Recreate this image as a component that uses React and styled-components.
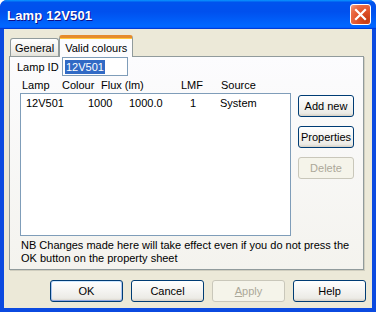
import React from 'react';
import styled, { createGlobalStyle } from 'styled-components';

const GlobalStyle = createGlobalStyle`
    html, body {
        margin: 0;
        padding: 0;
        background: #ffffff;
    }
    body {
        font-family: Tahoma, "Liberation Sans", Arial, sans-serif;
        font-size: 11px;
        color: #000;
    }
`

const Window = styled.div`
    width: 376px;
    height: 312px;
    display: flex;
    flex-direction: column;
    border-radius: 7px 7px 0 0;
    overflow: hidden;
    background: #0831d9;
`

const TitleBar = styled.div`
    height: 29px;
    flex: none;
    display: flex;
    align-items: center;
    justify-content: space-between;
    padding: 0 5px 0 7px;
    box-sizing: border-box;
    background: linear-gradient(180deg, #0997ff, #0053ee 8%, #0050ee 40%, #0066ff 88%, #0066ff 93%, #005bff 95%, #003dd7 96%, #003dd7);
`

const Title = styled.span`
    font-family: "Liberation Sans", Arial, sans-serif;
    font-weight: bold;
    font-size: 13px;
    color: #fff;
    text-shadow: 1px 1px #0f1089;
    letter-spacing: 0.2px;
    padding-top: 1px;
`

const CloseButton = styled.div`
    width: 21px;
    height: 21px;
    box-sizing: border-box;
    border: 1px solid #fff;
    border-radius: 3px;
    background: radial-gradient(circle at 80% 80%, #c43a12 0%, #e2532a 45%, #ea6e48 75%, #f2a58a 100%);
    display: flex;
    align-items: center;
    justify-content: center;
`

const Frame = styled.div`
    flex: 1;
    display: flex;
    flex-direction: column;
    border-left: 4px solid #0b4ae0;
    border-right: 4px solid #0b4ae0;
    border-bottom: 4px solid #0b4ae0;
    box-shadow: inset 1px 0 #1d6ef0, inset -1px 0 #0831d9;
`

const Client = styled.div`
    flex: 1;
    background: #ece9d8;
    display: flex;
    flex-direction: column;
    padding: 6px 8px 6px 5px;
`

const TabStrip = styled.div`
    display: flex;
    align-items: flex-end;
    height: 21px;
    padding-left: 1px;
    position: relative;
    z-index: 1;
`

const Tab = styled.div`
    box-sizing: border-box;
    height: ${p => p.$active ? 22 : 18}px;
    margin-bottom: ${p => p.$active ? -1 : 0}px;
    padding: 0 ${p => p.$active ? 5 : 4}px;
    display: flex;
    align-items: ${p => p.$active ? 'flex-start' : 'center'};
    padding-top: ${p => p.$active ? 4 : 1}px;
    border: 1px solid #919b9c;
    border-bottom: none;
    border-top: ${p => p.$active ? '3px solid #e68b2c' : '1px solid #919b9c'};
    border-radius: 3px 3px 0 0;
    background: ${p => p.$active ? '#fcfcfe' : 'linear-gradient(180deg, #fff, #ecebe6 80%, #e3e1d8)'};
    box-shadow: ${p => p.$active ? 'inset 0 1px #ffc73c' : 'none'};
`

const Panel = styled.div`
    box-sizing: border-box;
    height: 214px;
    border: 1px solid #919b9c;
    background: linear-gradient(180deg, #fcfcfe, #f4f3ee);
    box-shadow: 1px 1px #d0cebf;
    display: flex;
    flex-direction: column;
`

const IdRow = styled.div`
    display: flex;
    align-items: center;
    padding-left: 7px;
    height: 19px;
`

const Label = styled.span`
    width: 45px;
`

const Field = styled.div`
    box-sizing: border-box;
    width: 66px;
    height: 19px;
    border: 1px solid #7f9db9;
    background: #fff;
    display: flex;
    align-items: center;
    padding-left: 2px;
`

const Selected = styled.span`
    background: #316ac5;
    color: #fff;
    line-height: 14px;
    padding: 0 1px;
`

const HeadRow = styled.div`
    display: grid;
    grid-template-columns: 40px 39px 80px 40px 1fr;
    padding-left: 12px;
    margin-top: 3px;
    line-height: 13px;
`

const ListArea = styled.div`
    display: flex;
    align-items: flex-start;
    margin-top: 1px;
    padding-left: 10px;
    gap: 7px;
`

const ListBox = styled.div`
    box-sizing: border-box;
    width: 271px;
    height: 143px;
    border: 1px solid #7f9db9;
    background: #fff;
    padding-top: 3px;
`

const ListRow = styled.div`
    display: grid;
    grid-template-columns: 62px 41px 61px 30px 1fr;
    padding-left: 5px;
    line-height: 13px;
`

const SideButtons = styled.div`
    display: flex;
    flex-direction: column;
    gap: 9px;
    padding-top: 2px;
`

const Button = styled.div`
    box-sizing: border-box;
    width: ${p => p.$w}px;
    height: ${p => p.$h}px;
    display: flex;
    align-items: center;
    justify-content: center;
    border-radius: 3px;
    border: 1px solid ${p => p.$disabled ? '#c9c7ba' : '#003c74'};
    color: ${p => p.$disabled ? '#aca899' : '#000'};
    background: ${p => p.$disabled ? '#f5f4ea' : 'linear-gradient(180deg, #fff, #ecebe6 86%, #d6d0c5)'};
    box-shadow: ${p => p.$default ? 'inset 0 -1px #91a7e3, inset 1px 0 #a9c5f0, inset -1px 0 #a9c5f0, inset 0 1px #cee7ff' : 'none'};
    u { text-decoration: underline; }
`

const Note = styled.div`
    margin-top: 3px;
    padding-left: 11px;
    line-height: 13px;
    width: 340px;
`

const Footer = styled.div`
    display: flex;
    justify-content: flex-end;
    gap: 8px;
    margin-top: 10px;
    margin-right: -2px;
`

const CloseIcon = () => (
    <svg width="13" height="13" viewBox="0 0 13 13">
        <path d="M2 2 L11 11 M11 2 L2 11" stroke="#fff" strokeWidth="2.2" strokeLinecap="square" />
    </svg>
)

const App = () => {
    const rows = [
        { lamp: '12V501', colour: '1000', flux: '1000.0', lmf: '1', source: 'System' }
    ]

    return (
        <Window>
            <GlobalStyle />
            <TitleBar>
                <Title>Lamp 12V501</Title>
                <CloseButton><CloseIcon /></CloseButton>
            </TitleBar>
            <Frame>
                <Client>
                    <TabStrip>
                        <Tab>General</Tab>
                        <Tab $active>Valid colours</Tab>
                    </TabStrip>
                    <Panel>
                        <IdRow>
                            <Label>Lamp ID</Label>
                            <Field><Selected>12V501</Selected></Field>
                        </IdRow>
                        <HeadRow>
                            <span>Lamp</span>
                            <span>Colour</span>
                            <span>Flux (lm)</span>
                            <span>LMF</span>
                            <span>Source</span>
                        </HeadRow>
                        <ListArea>
                            <ListBox>
                                {rows.map((r, i) => (
                                    <ListRow key={i}>
                                        <span>{r.lamp}</span>
                                        <span>{r.colour}</span>
                                        <span>{r.flux}</span>
                                        <span>{r.lmf}</span>
                                        <span>{r.source}</span>
                                    </ListRow>
                                ))}
                            </ListBox>
                            <SideButtons>
                                <Button $w={56} $h={22}>Add new</Button>
                                <Button $w={56} $h={22}>Properties</Button>
                                <Button $w={56} $h={22} $disabled>Delete</Button>
                            </SideButtons>
                        </ListArea>
                        <Note>NB Changes made here will take effect even if you do not press the OK button on the property sheet</Note>
                    </Panel>
                    <Footer>
                        <Button $w={73} $h={22} $default>OK</Button>
                        <Button $w={73} $h={22}>Cancel</Button>
                        <Button $w={73} $h={22} $disabled><u>A</u>pply</Button>
                        <Button $w={73} $h={22}>Help</Button>
                    </Footer>
                </Client>
            </Frame>
        </Window>
    )
}

export default App;
